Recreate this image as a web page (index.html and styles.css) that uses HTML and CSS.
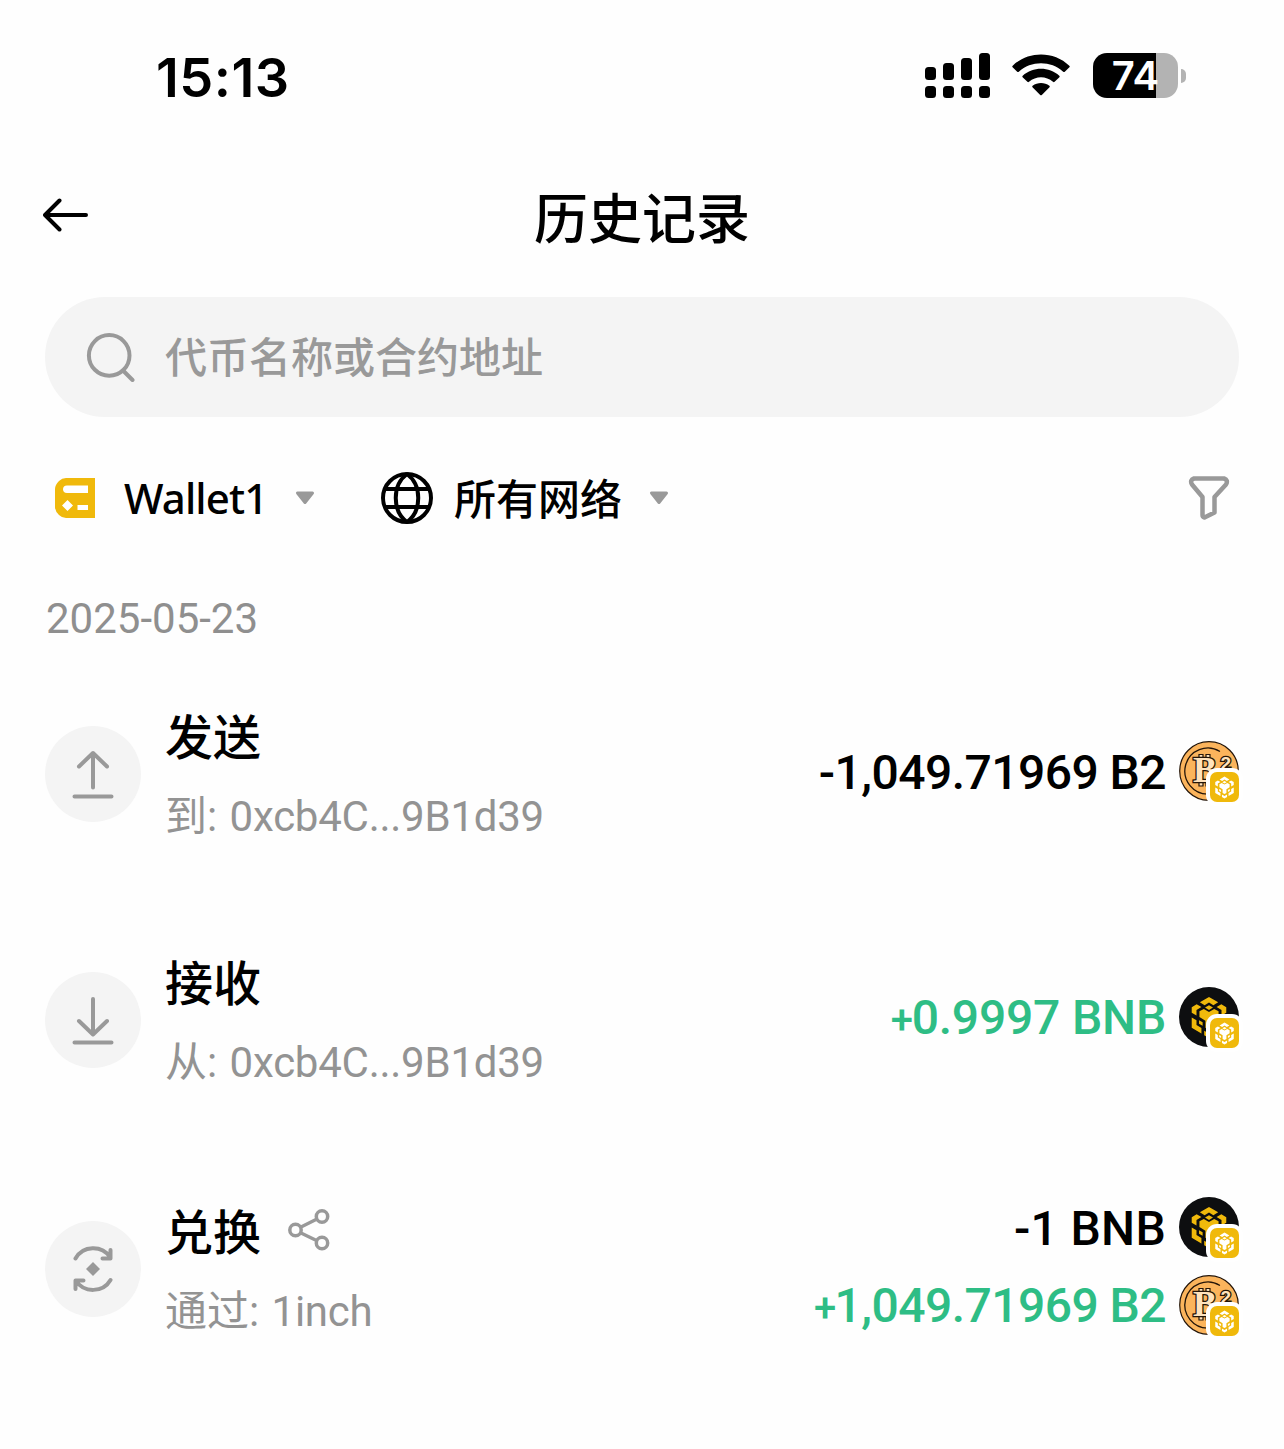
FILE: index.html
```html
<!DOCTYPE html>
<html lang="zh-CN">
<head>
<meta charset="utf-8">
<title>历史记录</title>
<link rel="stylesheet" href="styles.css">
</head>
<body>
<svg class="defs" width="0" height="0" aria-hidden="true">
  <symbol id="cube" viewBox="0 0 48 54">
    <path d="M12.500 8 24 1.300 35.500 8 29.500 11.500 24 8.300 18.500 11.500zM8.500 10.300 14.500 13.800 8.300 17.500V24.500L2.300 21V14zM39.500 10.300 33.500 13.800 39.700 17.500V24.500L45.700 21V14zM24 11.500 29 14.500 24 17.500 19 14.500zM12 19.300 17.500 16.200 24 20 30.500 16.200 36 19.300V26.500L28.500 31V40L24 42.500 19.500 40V31L12 26.500zM2.300 27 8.300 30.500V36.500L14.500 40.200V47L2.300 40zM45.700 27 39.700 30.500V36.500L33.500 40.200V47L45.700 40zM11.500 30.500 16 33V37.500L11.500 35zM36.500 30.500 32 33V37.500L36.500 35zM18 43.500 24 47 30 43.500V49.300L24 52.700 18 49.300z"/>
  </symbol>
  <symbol id="bnb" viewBox="0 0 60 60">
    <circle cx="30" cy="30" r="30" fill="#0d0e10"/>
    <use href="#cube" x="10.500" y="9" width="39" height="43" fill="#f0b90b"/>
  </symbol>
</svg>

<header class="status">
  <span class="time">15:13</span>
  <div class="indicators">
    <svg class="signal" width="66" height="46" viewBox="0 0 66 46">
      <rect x="0" y="14" width="11" height="13" rx="3.500"/><rect x="18" y="10" width="11" height="17" rx="3.500"/><rect x="36" y="5" width="11" height="22" rx="3.500"/><rect x="54" y="0" width="11" height="27" rx="3.500"/>
      <rect x="0" y="33" width="11" height="12" rx="3.500"/><rect x="18" y="33" width="11" height="12" rx="3.500"/><rect x="36" y="33" width="11" height="12" rx="3.500"/><rect x="54" y="33" width="11" height="12" rx="3.500"/>
    </svg>
    <svg class="wifi" width="58" height="43" viewBox="0 0 58 43">
      <path d="M.6 13.300Q-.2 12.500.7 11.700C16-3.400 42-3.400 57.300 11.700Q58.200 12.500 57.400 13.300L52.800 17.700Q52 18.400 51.200 17.700C39 6.500 19 6.500 6.800 17.700Q6 18.400 5.200 17.700zM10.600 23.200Q9.900 22.400 10.700 21.700C21 12.500 37 12.500 47.300 21.700Q48.100 22.400 47.400 23.200L42.600 27.800Q41.800 28.500 41 27.800C34 21.700 24 21.700 17 27.800Q16.200 28.500 15.400 27.800zM20.500 33.300Q19.800 32.500 20.600 31.800C25.500 28 32.500 28 37.400 31.800Q38.200 32.500 37.500 33.300L29.800 41Q29 41.700 28.200 41z"/>
    </svg>
    <div class="battery"><span class="cell">74</span><span class="nub"></span></div>
  </div>
</header>

<nav class="titlebar">
  <svg class="back" width="46" height="36" viewBox="0 0 46 36"><path d="M43 18H2.500M16.500 3.500 2 18 16.500 32.500"/></svg>
  <h1>历史记录</h1>
</nav>

<main>
  <div class="search">
    <svg width="50" height="50" viewBox="0 0 50 50"><circle cx="23.200" cy="23.400" r="20.300"/><path d="M37.500 39 46.500 48"/></svg>
    <span>代币名称或合约地址</span>
  </div>

  <div class="filters">
    <svg class="wallet" width="40" height="40" viewBox="0 0 40 40"><path fill="#f0b90b" d="M11 0H40V40H11Q7 40 4 37Q0 33 0 29V11Q0 7 4 3Q7 0 11 0z"/><path fill="#fff" d="M12 7.500H33V15H12Q8 15 8 11.300Q8 7.500 12 7.500zM12.500 22 18 27.500 12.500 33 7 27.500zM22.500 27H33V32H22.500z"/></svg>
    <span class="label wallet-name">Wallet1</span>
    <svg class="caret" width="20" height="14" viewBox="0 0 20 14"><path d="M2.500 2H17.500L10 11.500z"/></svg>
    <svg class="globe" width="54" height="54" viewBox="0 0 54 54"><circle cx="27" cy="27" r="24"/><path d="M4.500 18H49.500M4.500 36H49.500M27 3C12 14 12 40 27 51M27 3C42 14 42 40 27 51"/></svg>
    <span class="label network">所有网络</span>
    <svg class="caret" width="20" height="14" viewBox="0 0 20 14"><path d="M2.500 2H17.500L10 11.500z"/></svg>
    <svg class="funnel" width="42" height="46" viewBox="0 0 42 46"><path d="M6 3.500H36Q40.500 5 38 9.500L26.500 22V37.500L16.500 42.500Q14.500 42 14.500 40V22L4 9.500Q1.500 5 6 3.500z"/></svg>
  </div>

  <div class="date">2025-05-23</div>

  <section class="row">
    <div class="badge"><svg width="48" height="50" viewBox="0 0 48 50"><path d="M24 38.500V4M10 17.500 24 4 38 17.500M5.500 47.500H42.500"/></svg></div>
    <div class="info"><div class="name">发送</div><div class="sub"><span class="prep">到</span>: <span class="addr">0xcb4C...9B1d39</span></div></div>
    <div class="amounts">
      <div class="amount"><span class="long">-1,049.71969 B2</span><div class="token">
        <svg width="60" height="60" viewBox="0 0 60 60"><circle class="coin" cx="30" cy="30" r="29.300"/><path class="ring" d="M41 10.500A23 23 0 1 0 30 53"/><path class="bars" d="M20 13.500h4v6h-4zM27 13.500h4v6h-4zM20 39h4v6h-4zM27 39h4v6h-4z"/><text class="coin-b" x="14" y="41">B</text><text class="coin-2" x="41.500" y="28.500">2</text></svg>
        <i><svg width="21" height="23"><use href="#cube"/></svg></i></div></div>
    </div>
  </section>

  <section class="row">
    <div class="badge"><svg width="48" height="50" viewBox="0 0 48 50"><path d="M24 4V39.500M10 26 24 39.500 38 26M5.500 47.500H42.500"/></svg></div>
    <div class="info"><div class="name">接收</div><div class="sub"><span class="prep">从</span>: <span class="addr">0xcb4C...9B1d39</span></div></div>
    <div class="amounts">
      <div class="amount gain"><span class="bnb-gain"><span class="plus">+</span>0.9997 BNB</span><div class="token"><svg width="60" height="60"><use href="#bnb"/></svg><i><svg width="21" height="23"><use href="#cube"/></svg></i></div></div>
    </div>
  </section>

  <section class="row tall">
    <div class="badge"><svg width="48" height="50" viewBox="0 0 48 50"><path d="M6.500 14.500C14 1 33 1 41 13M41.500 6V14.500H33.500M41.500 36C34 49 15 49 7 37M6.500 45V36.500H14.500"/><path class="solid" d="M24 18 31 25 24 32 17 25z"/></svg></div>
    <div class="info"><div class="name">兑换<svg class="share" width="42" height="42" viewBox="0 0 42 42"><circle cx="7.500" cy="21" r="5.700"/><circle cx="34" cy="7.500" r="5.700"/><circle cx="34" cy="34" r="5.700"/><path d="M13 18 28.500 10.300M13 24 28.500 31.500"/></svg></div><div class="sub"><span class="prep">通过</span>: <span class="via">1inch</span></div></div>
    <div class="amounts">
      <div class="amount"><span class="bnb-loss">-1 BNB</span><div class="token"><svg width="60" height="60"><use href="#bnb"/></svg><i><svg width="21" height="23"><use href="#cube"/></svg></i></div></div>
      <div class="amount gain"><span class="long"><span class="plus">+</span>1,049.71969 B2</span><div class="token">
        <svg width="60" height="60" viewBox="0 0 60 60"><circle class="coin" cx="30" cy="30" r="29.300"/><path class="ring" d="M41 10.500A23 23 0 1 0 30 53"/><path class="bars" d="M20 13.500h4v6h-4zM27 13.500h4v6h-4zM20 39h4v6h-4zM27 39h4v6h-4z"/><text class="coin-b" x="14" y="41">B</text><text class="coin-2" x="41.500" y="28.500">2</text></svg>
        <i><svg width="21" height="23"><use href="#cube"/></svg></i></div></div>
    </div>
  </section>
</main>
</body>
</html>
```
FILE: styles.css
```css
* { box-sizing: border-box; }
body {
  margin: 0;
  min-height: 1449px;
  background: #fefefe;
  color: #000;
  font-family: Roboto, "Noto Sans CJK SC", sans-serif;
}
svg { display: block; flex: none; }
.defs { position: absolute; }

.status {
  height: 152px;
  padding: 0 98px 0 156px;
  display: flex;
  align-items: center;
  justify-content: space-between;
  font-family: Inter, sans-serif;
  font-weight: 600;
}
.time { font-size: 54px; line-height: 64px; padding-top: 3px; letter-spacing: 0.500px; }
.indicators { display: flex; align-items: center; }
.signal { margin-right: 1px; }
.wifi { margin: -1px 23px 0 20px; }
.battery { display: flex; align-items: center; gap: 3px; margin-top: -1px; }
.cell {
  width: 85px;
  height: 45px;
  border-radius: 14px;
  background: linear-gradient(90deg, #000 63px, #b3b3b3 63px);
  color: #fff;
  font-size: 40px;
  line-height: 45px;
  text-align: center;
  letter-spacing: 0;
}
.nub { width: 5px; height: 14px; border-radius: 0 7px 7px 0; background: #b3b3b3; }

.titlebar {
  height: 130px;
  padding: 0 43px;
  display: grid;
  grid-template-columns: 46px 1fr 46px;
  align-items: center;
}
.back { margin-top: -4px; fill: none; stroke: #000; stroke-width: 4; stroke-linecap: round; stroke-linejoin: round; }
h1 { margin: 0; padding-top: 7px; text-align: center; font-size: 54px; line-height: 80px; font-weight: 500; }

main { padding: 15px 45px 0; }
.search {
  height: 120px;
  padding-left: 41px;
  border-radius: 60px;
  background: #f4f4f4;
  color: #999;
  display: flex;
  align-items: center;
  gap: 29px;
  font-size: 42px;
}
.search span { line-height: 60px; padding-top: 4px; font-weight: 500; }
.search svg { fill: none; stroke: #999; stroke-width: 4; stroke-linecap: round; }

.filters { height: 162px; padding: 0 9px 0 10px; display: flex; align-items: center; }
.label { font-size: 42px; font-weight: 500; line-height: 60px; }
.wallet-name { margin-left: 29px; width: 144px; font-family: "Noto Sans", sans-serif; letter-spacing: -0.900px; }
.network { padding-top: 5px; }
.globe { margin: 0 20px 0 65px; fill: none; stroke: #000; stroke-width: 4; }
.caret { margin-left: 27px; fill: #999; stroke: #999; stroke-width: 3; stroke-linejoin: round; }
.funnel { margin-left: auto; fill: none; stroke: #999; stroke-width: 4.500; stroke-linejoin: round; }

.date { height: 72px; padding: 8px 0 0 1px; font-size: 42px; line-height: 64px; color: #8f8f8f; }

.row { height: 246px; display: flex; align-items: center; }
.row.tall { height: 252px; }
.badge {
  width: 96px;
  height: 96px;
  border-radius: 50%;
  background: #f4f4f4;
  display: flex;
  align-items: center;
  justify-content: center;
}
.badge svg { fill: none; stroke: #999; stroke-width: 4; stroke-linecap: round; stroke-linejoin: round; }
.badge .solid { fill: #999; stroke: none; }
.info { margin-left: 24px; padding-top: 6px; display: grid; gap: 8px; }
.name { height: 72px; padding-top: 4px; line-height: 72px; font-size: 48px; font-weight: 500; display: flex; align-items: center; gap: 27px; }
.share { margin-top: -8px; fill: none; stroke: #999; stroke-width: 3.500; }
.sub { height: 72px; line-height: 72px; font-size: 42px; color: #939393; white-space: nowrap; }
.addr { margin-left: 2px; letter-spacing: -0.250px; }
.via { margin-left: 2px; letter-spacing: -0.300px; }

.amounts { margin: 0 0 4px auto; display: grid; gap: 18px; }
.amount { height: 60px; display: flex; align-items: center; justify-content: flex-end; gap: 13px; font-size: 48px; line-height: 60px; font-weight: 500; white-space: nowrap; }
.amount > span { padding-top: 2px; }
.long { letter-spacing: -0.550px; }
.bnb-gain { letter-spacing: -0.200px; }
.bnb-loss { letter-spacing: 0.300px; }
.plus { font-size: 40px; margin-right: -1px; }
.gain { color: #2ebd85; }
.token { position: relative; width: 60px; height: 60px; margin-top: -2px; }
.token i {
  position: absolute;
  left: 31px;
  top: 31px;
  width: 29px;
  height: 30px;
  border-radius: 7px;
  background: #f0b90b;
  box-shadow: 0 0 0 4px #fff;
  display: flex;
  align-items: center;
  justify-content: center;
}
.token i svg { fill: #fff; }
.coin { fill: #fbb45c; stroke: #241508; stroke-width: 1.200; }
.ring { fill: none; stroke: #241508; stroke-width: 1.300; }
.bars { fill: #ffe3bd; stroke: #241508; stroke-width: 1.200; }
.coin-b, .coin-2 { font-family: "Liberation Serif", serif; font-weight: 700; fill: #ffe3bd; stroke: #241508; stroke-width: 2.600; paint-order: stroke; }
.coin-b { font-size: 36px; }
.coin-2 { font-family: "Liberation Sans", sans-serif; font-size: 19px; }
```
